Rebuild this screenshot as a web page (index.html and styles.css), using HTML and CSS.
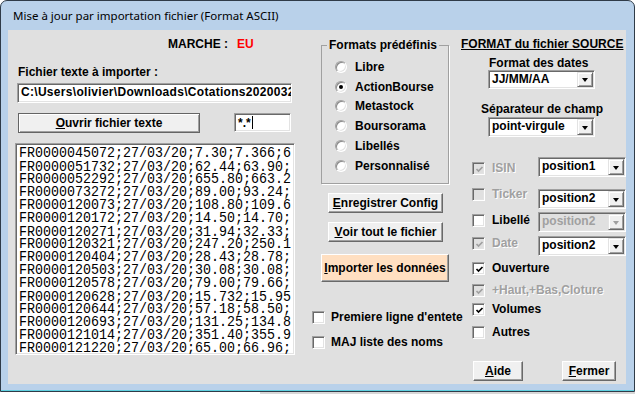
FILE: index.html
```html
<!DOCTYPE html>
<html lang="fr">
<head>
<meta charset="utf-8">
<title>Mise à jour par importation fichier</title>
<link rel="stylesheet" href="styles.css">
</head>
<body>
<div class="window">
  <div class="titlebar">Mise à jour par importation fichier (Format ASCII)</div>
  <div class="client">
    <div class="col col-left">
      <div class="marche"><span>MARCHE :</span><span class="eu">EU</span></div>
      <div class="lbl-file">Fichier texte à importer :</div>
      <div class="field path">C:\Users\olivier\Downloads\Cotations20200327.csv</div>
      <div class="row-open">
        <div class="btn btn-default btn-open"><u>O</u>uvrir fichier texte</div>
        <div class="field mask">*.*<span class="caret"></span></div>
      </div>
      <div class="field listing"><div class="listing-text">FR0000045072;27/03/20;7.30;7.366;6
FR0000051732;27/03/20;62.44;63.90;
FR0000052292;27/03/20;655.80;663.2
FR0000073272;27/03/20;89.00;93.24;
FR0000120073;27/03/20;108.80;109.6
FR0000120172;27/03/20;14.50;14.70;
FR0000120271;27/03/20;31.94;32.33;
FR0000120321;27/03/20;247.20;250.1
FR0000120404;27/03/20;28.43;28.78;
FR0000120503;27/03/20;30.08;30.08;
FR0000120578;27/03/20;79.00;79.66;
FR0000120628;27/03/20;15.732;15.95
FR0000120644;27/03/20;57.18;58.50;
FR0000120693;27/03/20;131.25;134.8
FR0000121014;27/03/20;351.40;355.9
FR0000121220;27/03/20;65.00;66.96;</div></div>
    </div>

    <div class="col col-mid">
      <fieldset class="group">
        <legend>Formats prédéfinis</legend>
        <div class="radios">
          <div class="radio-row"><span class="radio"></span><span>Libre</span></div>
          <div class="radio-row"><span class="radio checked"></span><span>ActionBourse</span></div>
          <div class="radio-row"><span class="radio"></span><span>Metastock</span></div>
          <div class="radio-row"><span class="radio"></span><span>Boursorama</span></div>
          <div class="radio-row"><span class="radio"></span><span>Libellés</span></div>
          <div class="radio-row"><span class="radio"></span><span>Personnalisé</span></div>
        </div>
      </fieldset>
      <div class="btn btn-save"><u>E</u>nregistrer Config</div>
      <div class="btn btn-view"><u>V</u>oir tout le fichier</div>
      <div class="btn btn-import"><u>I</u>mporter les données</div>
      <div class="cb-line cb-first"><span class="cb"></span><span>Premiere ligne d'entete</span></div>
      <div class="cb-line cb-maj"><span class="cb"></span><span>MAJ liste des noms</span></div>
    </div>

    <div class="col col-right">
      <div class="src-title">FORMAT du fichier SOURCE</div>
      <div class="lbl-dates">Format des dates</div>
      <div class="combo combo-date"><span class="combo-val">JJ/MM/AA</span><span class="combo-btn"><span class="arrow"></span></span></div>
      <div class="lbl-sep">Séparateur de champ</div>
      <div class="combo combo-sep"><span class="combo-val">point-virgule</span><span class="combo-btn"><span class="arrow"></span></span></div>

      <div class="frow row-isin">
        <div class="cb-line"><span class="cb dis checked"><svg viewBox="0 0 9 9" width="9" height="9"><path d="M1.5 4 L3.5 6 L7.5 2" fill="none" stroke="#a0a0a0" stroke-width="1.7"/></svg></span><span class="dis-txt">ISIN</span></div>
        <div class="combo combo-pos"><span class="combo-val">position1</span><span class="combo-btn"><span class="arrow"></span></span></div>
      </div>
      <div class="frow row-ticker">
        <div class="cb-line"><span class="cb dis"></span><span class="dis-txt">Ticker</span></div>
        <div class="combo combo-pos"><span class="combo-val">position2</span><span class="combo-btn"><span class="arrow"></span></span></div>
      </div>
      <div class="frow row-lib">
        <div class="cb-line"><span class="cb"></span><span>Libellé</span></div>
        <div class="combo combo-pos combo-dis"><span class="combo-val">position2</span><span class="combo-btn"><span class="arrow"></span></span></div>
      </div>
      <div class="frow row-date">
        <div class="cb-line"><span class="cb dis checked"><svg viewBox="0 0 9 9" width="9" height="9"><path d="M1.5 4 L3.5 6 L7.5 2" fill="none" stroke="#a0a0a0" stroke-width="1.7"/></svg></span><span class="dis-txt">Date</span></div>
        <div class="combo combo-pos"><span class="combo-val">position2</span><span class="combo-btn"><span class="arrow"></span></span></div>
      </div>
      <div class="cb-line cb-r cb-ouv"><span class="cb"><svg viewBox="0 0 9 9" width="9" height="9"><path d="M1.5 4 L3.5 6 L7.5 2" fill="none" stroke="#000" stroke-width="1.7"/></svg></span><span>Ouverture</span></div>
      <div class="cb-line cb-r cb-haut"><span class="cb dis"><svg viewBox="0 0 9 9" width="9" height="9"><path d="M1.5 4 L3.5 6 L7.5 2" fill="none" stroke="#a0a0a0" stroke-width="1.7"/></svg></span><span class="dis-txt">+Haut,+Bas,Cloture</span></div>
      <div class="cb-line cb-r cb-vol"><span class="cb"><svg viewBox="0 0 9 9" width="9" height="9"><path d="M1.5 4 L3.5 6 L7.5 2" fill="none" stroke="#000" stroke-width="1.7"/></svg></span><span>Volumes</span></div>
      <div class="cb-line cb-r cb-aut"><span class="cb"></span><span>Autres</span></div>
      <div class="bottom-btns">
        <div class="btn btn-aide"><u>A</u>ide</div>
        <div class="btn btn-fermer"><u>F</u>ermer</div>
      </div>
    </div>
  </div>
</div>
<div class="below"></div>
</body>
</html>
```

FILE: styles.css
```css
* { box-sizing: border-box; }
html, body { margin: 0; padding: 0; }
body {
  width: 635px;
  height: 394px;
  overflow: hidden;
  background: #ffffff;
  font-family: "Liberation Sans", Arial, sans-serif;
  font-size: 12px;
  font-weight: bold;
  color: #000;
}

.window {
  width: 635px;
  height: 392px;
  background: #b9d1ea;
  border: 1px solid #2f3b48;
  border-radius: 7px 7px 0 0;
  padding: 0 8px 6px 7px;
  display: flex;
  flex-direction: column;
  box-shadow: inset 0 -1px 0 #5fd0e0;
}

.titlebar {
  height: 29px;
  flex: none;
  padding-left: 5px;
  padding-top: 7px;
  font-family: "Noto Sans", "Open Sans", sans-serif;
  font-weight: normal;
  font-size: 11.5px;
  line-height: 16px;
  color: #000;
  white-space: nowrap;
}

.client {
  width: 618px;
  height: 354px;
  flex: none;
  background: #e0e0e0;
  display: flex;
}

.col { display: flex; flex-direction: column; align-items: flex-start; }
.col-left { width: 300px; }
.col-mid { width: 147px; }
.col-right { width: 171px; }

/* generic controls */
.field {
  background: #fff;
  border-top: 1px solid #a0a0a0;
  border-left: 1px solid #a0a0a0;
  border-bottom: 1px solid #fff;
  border-right: 1px solid #fff;
  box-shadow: inset 1px 1px 0 #696969, inset -1px -1px 0 #e3e3e3;
  overflow: hidden;
  white-space: nowrap;
}

.btn {
  background: #f0f0f0;
  border-top: 1px solid #fff;
  border-left: 1px solid #fff;
  border-bottom: 1px solid #696969;
  border-right: 1px solid #696969;
  box-shadow: inset -1px -1px 0 #a0a0a0;
  display: flex;
  align-items: center;
  justify-content: center;
  white-space: nowrap;
  line-height: 14px;
}
.btn u { text-decoration: underline; text-underline-offset: 1px; }
.btn-default {
  border: 1px solid #646464;
  box-shadow: inset 1px 1px 0 #fff, inset -1px -1px 0 #a0a0a0;
}

/* left column */
.marche { margin-top: 7px; height: 14px; line-height: 14px; padding-left: 160px; }
.eu { color: #ff0000; margin-left: 9px; }
.lbl-file { margin-top: 14px; height: 14px; line-height: 14px; padding-left: 10px; }
.path {
  margin-top: 4px;
  margin-left: 9px;
  width: 275px;
  height: 20px;
  line-height: 17px;
  padding-left: 3px;
  letter-spacing: 0.3px;
}
.row-open { margin-top: 10px; display: flex; align-items: flex-start; }
.btn-open { margin-left: 10px; width: 182px; height: 20px; }
.mask {
  margin-left: 34px;
  width: 57px;
  height: 19px;
  line-height: 16px;
  padding-left: 3px;
  display: flex;
  align-items: center;
}
.caret { display: inline-block; width: 1px; height: 13px; background: #000; margin-left: 1px; }
.listing {
  margin-top: 10px;
  margin-left: 7px;
  width: 280px;
  height: 212px;
  padding: 2px 0 0 3px;
}
.listing-text {
  font-family: "Liberation Mono", "Courier New", monospace;
  font-weight: normal;
  font-size: 13.33px;
  line-height: 11.6px;
  white-space: pre;
  color: #000;
  padding-top: 1px;
  transform: scaleY(1.12);
  transform-origin: 0 0;
}

/* middle column */
.group {
  margin: 8px 0 0 13px;
  padding: 0;
  width: 128px;
  height: 146px;
  border: 1px solid #a0a0a0;
  box-shadow: 1px 1px 0 #fff;
  min-inline-size: 0;
}
.group legend {
  margin-left: 5px;
  padding: 0 2px;
  line-height: 14px;
  font-size: 12px;
}
.radios { margin-top: 5px; }
.radio-row {
  height: 19.75px;
  display: flex;
  align-items: center;
  padding-left: 13px;
  gap: 8px;
}
.radio {
  width: 12px;
  height: 12px;
  border-radius: 50%;
  background: #fff;
  border: 1px solid;
  border-color: #a0a0a0 #ffffff #ffffff #a0a0a0;
  box-shadow: inset 1px 1px 0 #8a8a8a, inset -1px -1px 0 #e3e3e3;
  display: flex;
  align-items: center;
  justify-content: center;
  flex: none;
}
.radio.checked::after {
  content: "";
  width: 4px;
  height: 4px;
  border-radius: 50%;
  background: #000;
}

.btn-save { margin: 9px 0 0 20px; width: 115px; height: 20px; }
.btn-view { margin: 9px 0 0 20px; width: 115px; height: 20px; }
.btn-import {
  margin: 12px 0 0 13px;
  width: 128px;
  height: 28px;
  background: #ffdfc1;
}

.cb-line { display: flex; align-items: center; height: 13px; line-height: 13px; white-space: nowrap; }
.cb {
  width: 13px;
  height: 13px;
  flex: none;
  background: #fff;
  border-top: 1px solid #a0a0a0;
  border-left: 1px solid #a0a0a0;
  border-bottom: 1px solid #fff;
  border-right: 1px solid #fff;
  box-shadow: inset 1px 1px 0 #696969, inset -1px -1px 0 #e3e3e3;
  display: flex;
  align-items: center;
  justify-content: center;
  padding: 1px 0 0 1px;
}
.cb svg { display: block; }
.cb.dis { background: #e0e0e0; }
.cb-line .cb { margin-right: 7px; }
.dis-txt { color: #a0a0a0; text-shadow: 1px 1px 0 #fff; }
.cb-first { margin: 29px 0 0 4px; }
.cb-maj { margin: 12px 0 0 4px; }
.cb-first .cb, .cb-maj .cb { margin-right: 6px; }

/* right column */
.src-title {
  margin-top: 7px;
  height: 14px;
  line-height: 14px;
  padding-left: 6px;
  text-decoration: underline;
  text-underline-offset: 1px;
}
.lbl-dates { margin-top: 5px; height: 14px; line-height: 14px; padding-left: 34px; }
.lbl-sep { margin-top: 13px; height: 14px; line-height: 14px; padding-left: 26px; }

.combo {
  display: flex;
  align-items: stretch;
  background: #fff;
  border-top: 1px solid #a0a0a0;
  border-left: 1px solid #a0a0a0;
  border-bottom: 1px solid #fff;
  border-right: 1px solid #fff;
  box-shadow: inset 1px 1px 0 #696969, inset -1px -1px 0 #e3e3e3;
  padding: 1px 1px 1px 1px;
  white-space: nowrap;
}
.combo-val { flex: 1; padding-left: 2px; line-height: 15px; overflow: hidden; }
.combo-btn {
  width: 16px;
  flex: none;
  background: #f0f0f0;
  border-top: 1px solid #e3e3e3;
  border-left: 1px solid #e3e3e3;
  border-bottom: 1px solid #696969;
  border-right: 1px solid #696969;
  box-shadow: inset 1px 1px 0 #fff, inset -1px -1px 0 #a0a0a0;
  display: flex;
  align-items: center;
  justify-content: center;
}
.arrow {
  width: 0;
  height: 0;
  border-left: 3.5px solid transparent;
  border-right: 3.5px solid transparent;
  border-top: 4px solid #000;
  margin-top: 1px;
}
.combo-date { margin: 0 0 0 33px; width: 107px; height: 19px; }
.combo-sep { margin: 1px 0 0 33px; width: 107px; height: 20px; }
.combo-pos { width: 88px; height: 20px; margin-left: auto; }
.combo-dis { background: #e0e0e0; }
.combo-dis .combo-val { color: #a0a0a0; }
.combo-dis .arrow { border-top-color: #a0a0a0; }

.frow { display: flex; align-items: flex-start; width: 171px; padding-left: 17px; }
.row-isin { margin-top: 20px; }
.row-isin .cb-line { margin-top: 5px; }
.row-ticker { margin-top: 11px; }
.row-ticker .combo { margin-top: 1px; }
.row-lib { margin-top: 3px; }
.row-lib .cb-line { margin-top: 2px; }
.row-date { margin-top: 4px; }
.row-date .cb-line { margin-top: 1px; }

.cb-r { margin-left: 17px; }
.cb-ouv { margin-top: 6px; }
.cb-haut { margin-top: 9px; }
.cb-vol { margin-top: 6px; }
.cb-aut { margin-top: 10px; }

.bottom-btns { display: flex; margin: 22px 0 0 18px; gap: 39px; }
.btn-aide { width: 50px; height: 20px; }
.btn-fermer { width: 54px; height: 20px; }

.below {
  height: 2px;
  background: linear-gradient(to right, #ffffff 0, #ffffff 260px, #d8d8d8 260px);
}
```
